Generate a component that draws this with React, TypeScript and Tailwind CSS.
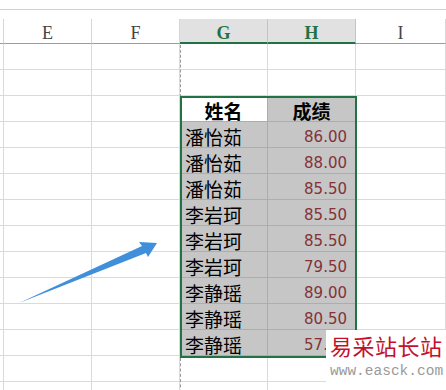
import React from "react";

const cols = [
	{ key: "D", w: "w-[4px]" },
	{ key: "E", w: "w-[88px]" },
	{ key: "F", w: "w-[88px]" },
	{ key: "G", w: "w-[88px]" },
	{ key: "H", w: "w-[88px]" },
	{ key: "I", w: "w-[90px]" },
];

const rows: { name: string; score: string }[] = [
	{ name: "潘怡茹", score: "86.00" },
	{ name: "潘怡茹", score: "88.00" },
	{ name: "潘怡茹", score: "85.50" },
	{ name: "李岩珂", score: "85.50" },
	{ name: "李岩珂", score: "85.50" },
	{ name: "李岩珂", score: "79.50" },
	{ name: "李静瑶", score: "89.00" },
	{ name: "李静瑶", score: "80.50" },
	{ name: "李静瑶", score: "57.50" },
];

const cjk = "font-['Microsoft_YaHei','Noto_Sans_CJK_SC',sans-serif]";

const EmptyRow = () => (
	<div className="flex h-[26px]">
		{cols.map((c) => (
			<div
				key={c.key}
				className={`${c.w} h-full border-r border-b border-[#dadada] shrink-0`}
			/>
		))}
	</div>
);

const DataRow = ({
	left,
	right,
	header,
}: {
	left: string;
	right: string;
	header?: boolean;
}) => (
	<div className="flex h-[26px]">
		<div className="w-[4px] h-full border-r border-b border-[#dadada] shrink-0" />
		<div className="w-[88px] h-full border-r border-b border-[#dadada] shrink-0" />
		<div className="w-[88px] h-full border-r border-b border-[#dadada] shrink-0" />
		<div
			className={`w-[88px] h-full border-r border-b border-[#adadad] shrink-0 flex items-center pt-[3px] ${cjk} text-[19px] leading-none text-black ${
				header ? "bg-white justify-center font-bold" : "bg-[#c6c6c6] pl-[5px]"
			}`}
		>
			{left}
		</div>
		<div
			className={`w-[88px] h-full border-r border-b border-[#adadad] shrink-0 flex items-center bg-[#c6c6c6] leading-none ${
				header
					? `${cjk} justify-center font-bold text-[19px] text-black pt-[3px]`
					: "justify-end pr-[8px] pt-[6px] font-['DejaVu_Sans',sans-serif] text-[15px] text-[#833238]"
			}`}
		>
			{right}
		</div>
		<div className="w-[90px] h-full border-r border-b border-[#dadada] shrink-0" />
	</div>
);

export default function App() {
	return (
		<div className="relative w-[446px] h-[390px] overflow-hidden bg-white">
			<div className="h-[10px] border-b border-[#d2d2d2]" />
			<div className="h-[9px]" />
			{/* column letters */}
			<div className="flex h-[25px] font-['Liberation_Serif',serif] text-[18px] leading-none">
				{cols.map((c) => {
					const sel = c.key === "G" || c.key === "H";
					return (
						<div
							key={c.key}
							className={`${c.w} h-full shrink-0 border-r flex items-center justify-center pt-[4px] ${
								sel
									? "bg-[#e1e1e1] border-[#c4c4c4] border-b-2 border-b-[#217346] text-[#217346] font-bold"
									: "border-[#d6d6d6] border-b border-b-[#9c9c9c] text-[#444]"
							}`}
						>
							{c.key === "D" ? "" : c.key}
						</div>
					);
				})}
			</div>
			<EmptyRow />
			<EmptyRow />
			<DataRow left="姓名" right="成绩" header />
			{rows.map((r, i) => (
				<DataRow key={i} left={r.name} right={r.score} />
			))}
			<EmptyRow />
			<EmptyRow />

			{/* page break line */}
			<div className="absolute left-[180px] top-[45px] h-[52px] border-l border-dashed border-[#9a9a9a]" />
			<div className="absolute left-[180px] top-[358px] h-[40px] border-l border-dashed border-[#9a9a9a]" />

			{/* selection border */}
			<div className="absolute left-[180px] top-[96px] w-[177px] h-[262px] border-2 border-[#217346]" />

			{/* arrow */}
			<svg
				className="absolute left-0 top-0"
				width="446"
				height="390"
				viewBox="0 0 446 390"
			>
				<polygon
					points="19,303 142,246 139,242 157,243 148,257 146,253"
					fill="#3f8fdb"
				/>
			</svg>

			{/* watermark */}
			<div className="absolute left-[326px] top-[330px] w-[120px] h-[60px] bg-white flex flex-col pl-[4px]">
				<div
					className={`${cjk} text-[22px] leading-[30px] text-[#c5102b] tracking-[0.5px]`}
				>
					易采站长站
				</div>
				<div className="font-['Liberation_Mono',monospace] text-[14.5px] leading-[22px] text-[#9a9a9a]">
					www.easck.com
				</div>
			</div>
		</div>
	);
}
